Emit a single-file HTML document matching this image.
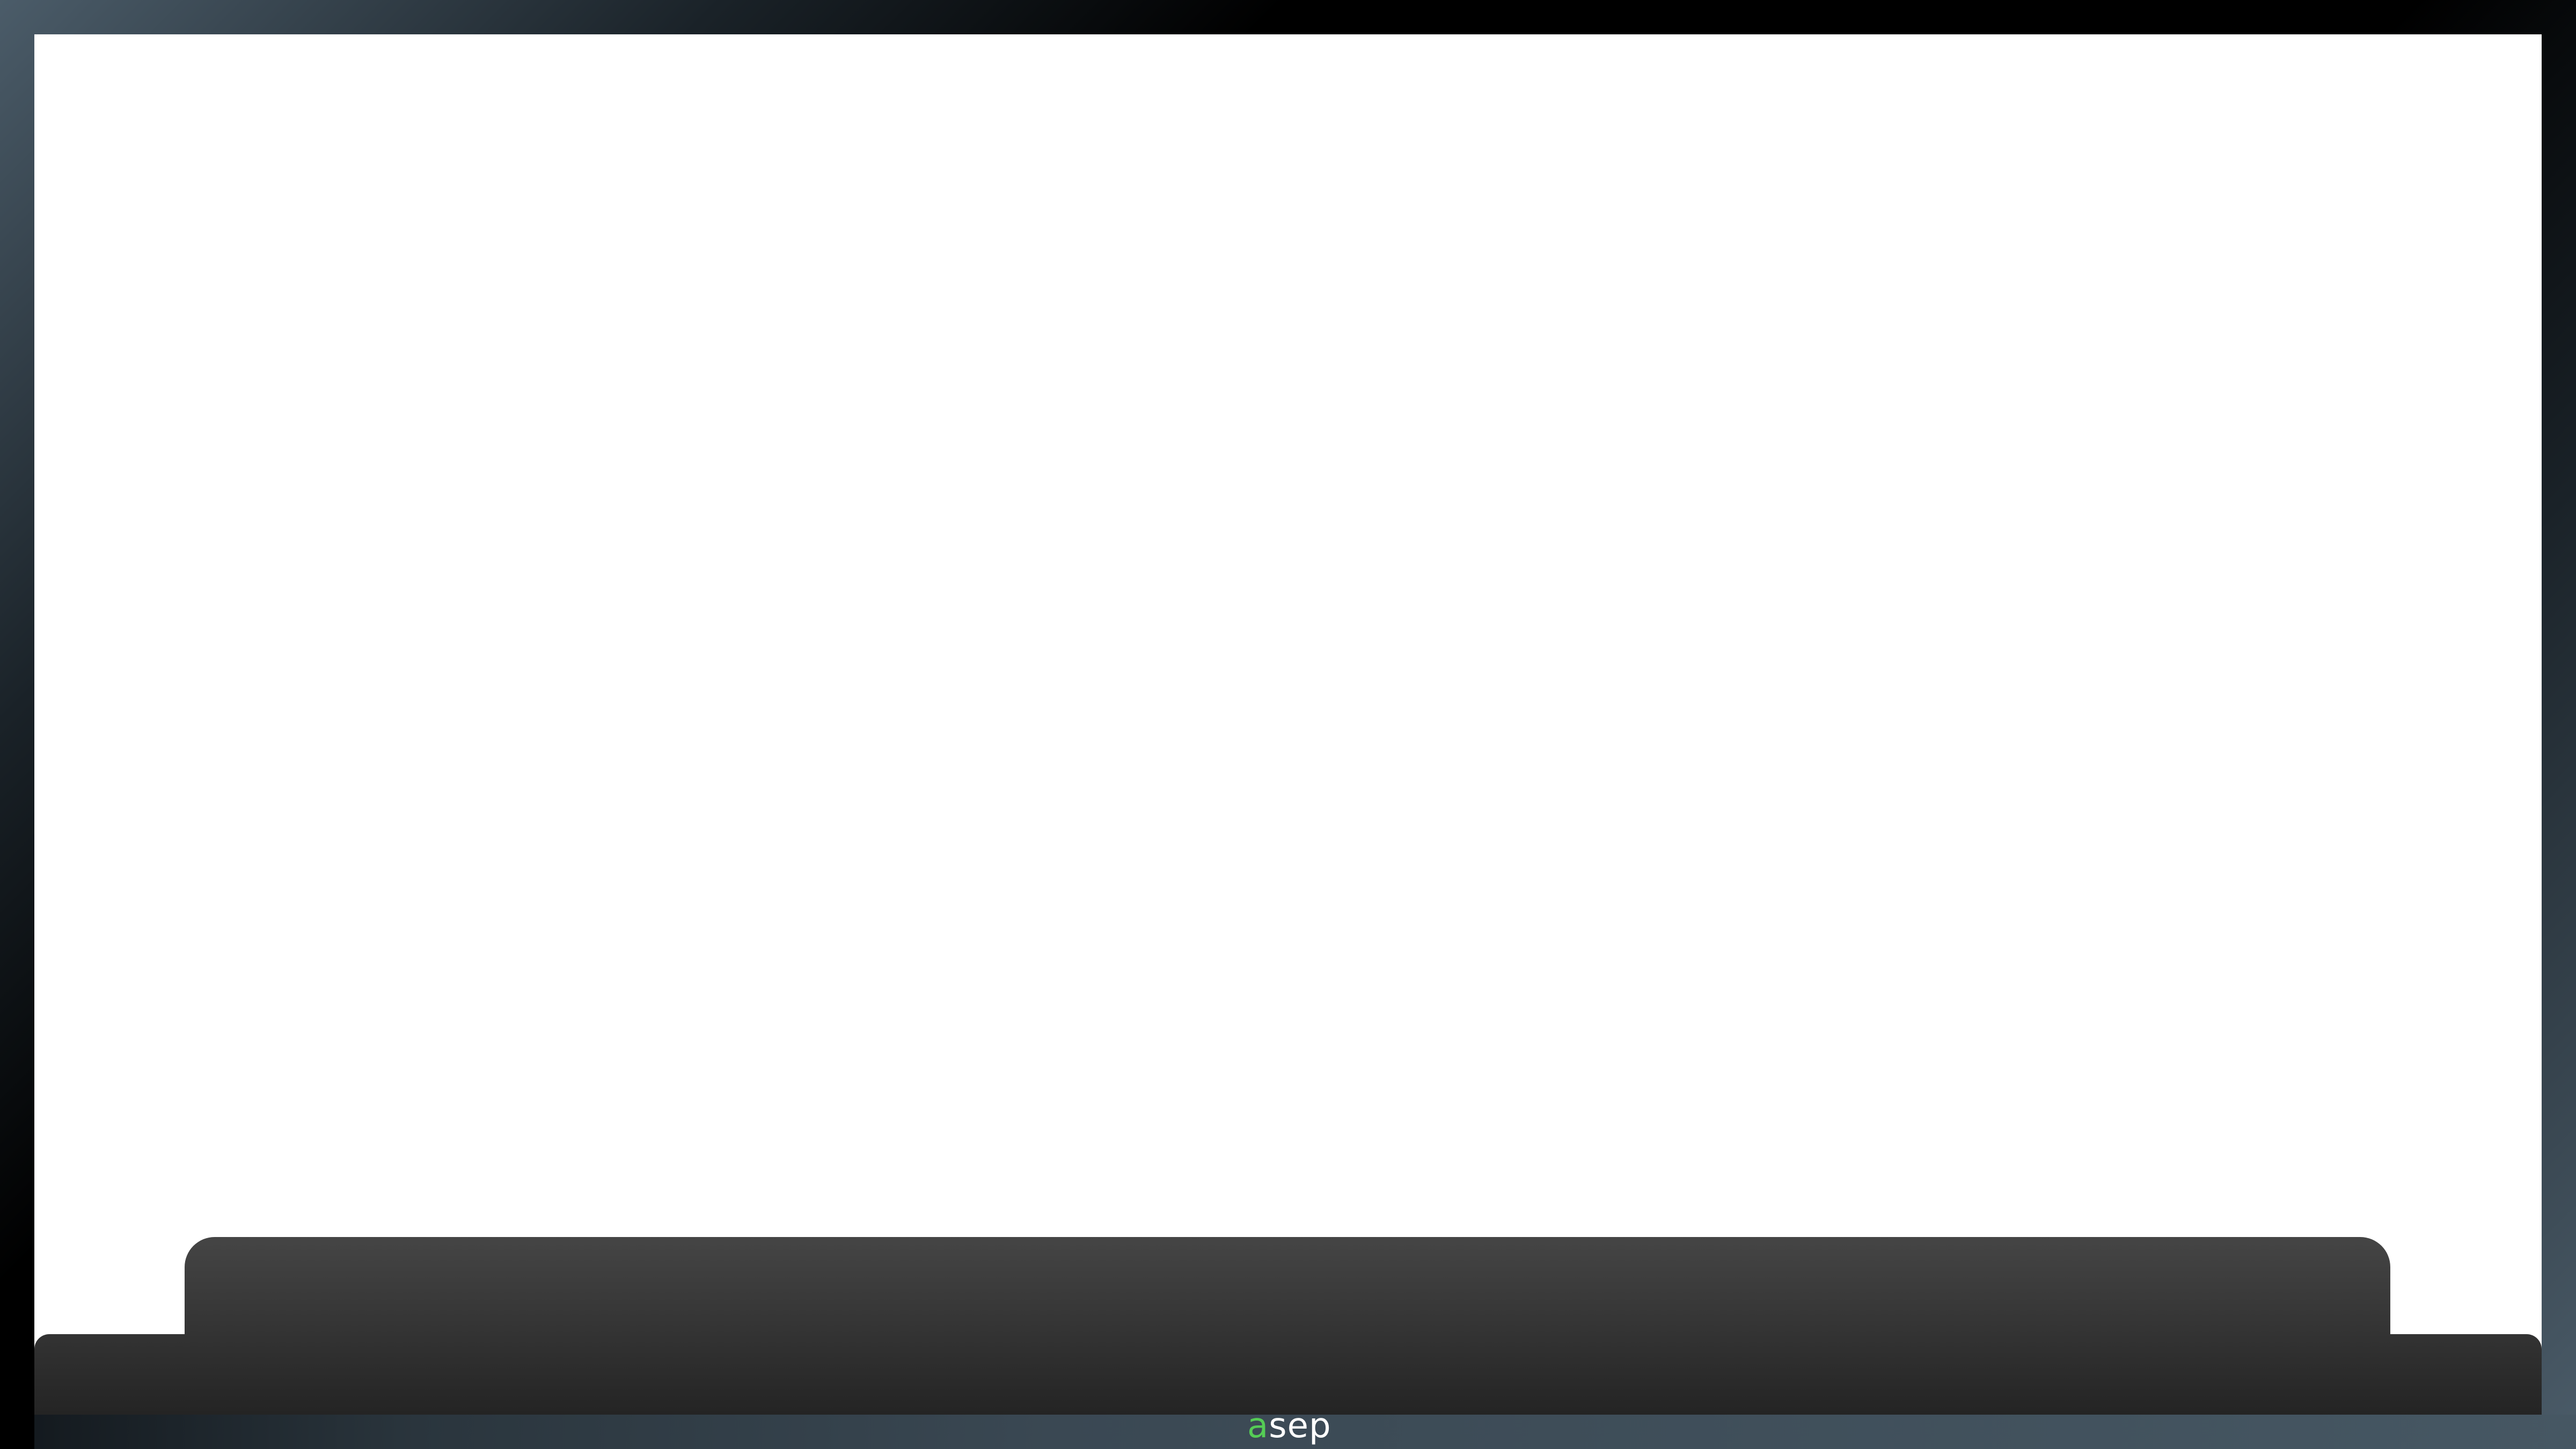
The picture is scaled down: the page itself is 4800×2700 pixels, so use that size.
<!DOCTYPE html>
<html><head><meta charset="utf-8"><style>
html,body{margin:0;padding:0}
body{width:4800px;height:2700px;position:relative;overflow:hidden;background:linear-gradient(135deg,#4b5c69 0%,#1a2228 18%,#000 32%,#000 60%,#1a2228 76%,#4b5c69 100%)}
.bot{position:absolute;left:64px;top:2636px;width:4736px;height:64px;background:linear-gradient(90deg,#141a1f 0%,#2a353d 15%,#3a4853 40%,#465763 100%)}
.white{position:absolute;left:64px;top:64px;width:4672px;height:2572px;background:#fff}
.top{position:absolute;left:344px;top:2305px;width:4110px;height:331px;border-radius:56px 56px 0 0;background:linear-gradient(#454545,#242424)}
.low{position:absolute;left:64px;top:2486px;width:4672px;height:150px;border-radius:28px 28px 0 0;background:linear-gradient(#333,#242424)}
.txt{position:absolute;left:2324px;top:2617px;font-family:"DejaVu Sans","Liberation Sans",sans-serif;font-size:64px;line-height:80px;color:#fff;letter-spacing:1px}
.txt span{color:#55cc55}
</style></head><body>
<div class="bot"></div>
<div class="white"></div>
<div class="low"></div>
<div class="top"></div>
<div class="txt"><span>a</span>sep</div>
</body></html>
